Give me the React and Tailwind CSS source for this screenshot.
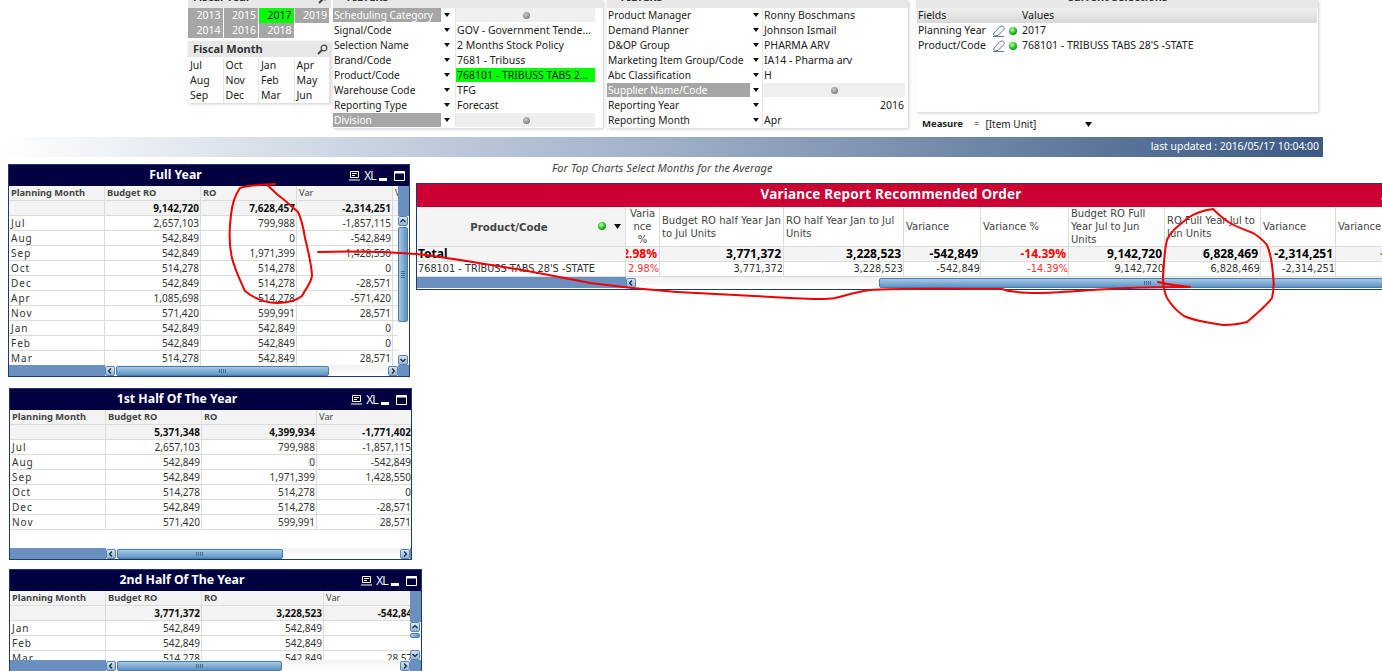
import React from 'react';

const sans = 'font-["Noto_Sans","DejaVu_Sans",sans-serif]';
const wide = 'font-["DejaVu_Sans",sans-serif]';

const fullYearRows = [
  ['Jul', '2,657,103', '799,988', '-1,857,115'],
  ['Aug', '542,849', '0', '-542,849'],
  ['Sep', '542,849', '1,971,399', '1,428,550'],
  ['Oct', '514,278', '514,278', '0'],
  ['Dec', '542,849', '514,278', '-28,571'],
  ['Apr', '1,085,698', '514,278', '-571,420'],
  ['Nov', '571,420', '599,991', '28,571'],
  ['Jan', '542,849', '542,849', '0'],
  ['Feb', '542,849', '542,849', '0'],
  ['Mar', '514,278', '542,849', '28,571'],
];
const firstHalfRows = [
  ['Jul', '2,657,103', '799,988', '-1,857,115'],
  ['Aug', '542,849', '0', '-542,849'],
  ['Sep', '542,849', '1,971,399', '1,428,550'],
  ['Oct', '514,278', '514,278', '0'],
  ['Dec', '542,849', '514,278', '-28,571'],
  ['Nov', '571,420', '599,991', '28,571'],
];
const secondHalfRows = [
  ['Jan', '542,849', '542,849', '0'],
  ['Feb', '542,849', '542,849', '0'],
  ['Mar', '514,278', '542,849', '28,571'],
];

const filtersLeft = [
  ['Scheduling Category', null, true],
  ['Signal/Code', 'GOV - Government Tende...'],
  ['Selection Name', '2 Months Stock Policy'],
  ['Brand/Code', '7681 - Tribuss'],
  ['Product/Code', '768101 - TRIBUSS TABS 2...', false, true],
  ['Warehouse Code', 'TFG'],
  ['Reporting Type', 'Forecast'],
  ['Division', null, true],
];
const filtersRight = [
  ['Product Manager', 'Ronny Boschmans'],
  ['Demand Planner', 'Johnson Ismail'],
  ['D&OP Group', 'PHARMA ARV'],
  ['Marketing Item Group/Code', 'IA14 - Pharma arv'],
  ['Abc Classification', 'H'],
  ['Supplier Name/Code', null, true],
  ['Reporting Year', '2016', false, false, true],
  ['Reporting Month', 'Apr'],
];

function TitleIcons() {
  return (
    <div className="flex items-center justify-end pr-[4px] text-white">
      <svg width="11" height="10" viewBox="0 0 11 10" fill="none" stroke="white" strokeWidth="1">
        <path d="M1.5.5h8v6h-8zM3 2.5h5M3 4.5h3M0 9h11" />
      </svg>
      <span className='ml-[4px] w-[11px] font-["Liberation_Sans",sans-serif] text-[13px] leading-none tracking-[-1px] scale-x-[0.85] origin-left'>XL</span>
      <svg className="ml-[4px]" width="9" height="10" viewBox="0 0 9 10"><path d="M0 7h8v3H0z" fill="white" /></svg>
      <svg className="ml-[6px]" width="11" height="10" viewBox="0 0 11 10" fill="none" stroke="white"><path d="M.5.5h10v9H.5z" /><path d="M.5 1.5h10" strokeWidth="2" /></svg>
    </div>
  );
}

function Arrow({ dir }) {
  const paths = {
    up: 'M2.5 6 5 3.5 7.5 6',
    down: 'M2.5 4 5 6.5 7.5 4',
    left: 'M6 2.5 3.5 5 6 7.5',
    right: 'M4 2.5 6.5 5 4 7.5',
  };
  return (
    <div className="w-[10px] h-[10px] shrink-0 rounded-[2px] border border-[#5a83ad] bg-gradient-to-b from-[#d8e6f3] to-[#8fb4d8]">
      <svg width="8" height="8" viewBox="1 1 8 8" fill="none" stroke="#123" strokeWidth="1.2"><path d={paths[dir]} /></svg>
    </div>
  );
}

function HScroll({ leftClass, thumbClass, rightClass }) {
  return (
    <div className="flex h-[11px] bg-[#6a90c0]">
      <div className={`shrink-0 ${leftClass}`} />
      <div className="flex-1 min-w-0 overflow-hidden flex items-center bg-gradient-to-b from-[#f2f2f2] to-white">
        <Arrow dir="left" />
        <div className={`h-[10px] shrink-0 ml-[1px] rounded-[2px] border border-[#4a7cab] bg-gradient-to-b from-[#a6c9e6] to-[#5e93c4] flex items-center justify-center ${thumbClass}`}>
          <svg width="8" height="4" viewBox="0 0 8 4" stroke="#4a6f94"><path d="M.5 0v4M2.5 0v4M4.5 0v4M6.5 0v4" /></svg>
        </div>
        <div className="flex-1" />
        <Arrow dir="right" />
      </div>
      {rightClass && <div className={`shrink-0 ${rightClass}`} />}
    </div>
  );
}

function VScroll({ thumbClass, topClass, trackH, ridges }) {
  return (
    <div className="w-[11px] shrink-0 flex flex-col bg-white">
      <div className={`bg-[#6a90c0] ${topClass}`} />
      <div className={`flex flex-col items-start ${trackH}`}>
        <Arrow dir="up" />
        <div className={`w-[10px] mt-[1px] rounded-[2px] border border-[#4a7cab] bg-gradient-to-r from-[#a6c9e6] to-[#5e93c4] flex items-center justify-center ${thumbClass}`}>
          {ridges && <svg width="4" height="8" viewBox="0 0 4 8" stroke="#4a6f94"><path d="M0 .5h4M0 2.5h4M0 4.5h4M0 6.5h4" /></svg>}
        </div>
        <div className="flex-1" />
        <Arrow dir="down" />
      </div>
    </div>
  );
}

function MonthTable({ title, total, rows, cols, boxClass, vscroll, thumbClass, rightClass, bodyClass, nextHeader }) {
  const headers = ['Planning Month', 'Budget RO', 'RO', 'Var'];
  return (
    <div className={`border border-[#1c3a72] bg-white flex flex-col overflow-hidden ${boxClass}`}>
      <div className="h-[21px] bg-[#000040] flex items-center shrink-0">
        <div className={`flex-1 text-center text-white font-bold text-[12.3px] ${sans}`}>{title}</div>
        <div className="w-[67px] shrink-0"><TitleIcons /></div>
      </div>
      <div className={`flex overflow-hidden ${bodyClass}`}>
        <div className="flex-1 min-w-0 overflow-hidden">
          <div className={`flex h-[15px] bg-[#f4f4f4] border-b border-[#dcdcdc] font-bold text-[#444] text-[9.3px] leading-[14px] ${sans}`}>
            {headers.map((h, i) => (
              <div key={h} className={`${cols[i]} shrink-0 pl-[2px] border-r border-[#dcdcdc] ${i === 3 ? 'font-normal' : ''}`}>{h}</div>
            ))}
            {nextHeader && <div className="w-[60px] shrink-0 pl-[2px] font-normal">{nextHeader}</div>}
          </div>
          <div className={`flex h-[15px] bg-[#f4f4f4] border-b border-[#dcdcdc] font-bold text-[#111] text-[10px] leading-[14px] ${sans}`}>
            {['', ...total].map((t, i) => (
              <div key={i} className={`${cols[i]} shrink-0 pr-[1px] text-right border-r border-[#dcdcdc]`}>{t}</div>
            ))}
          </div>
          {rows.map((r) => (
            <div key={r[0]} className={`flex h-[15px] border-b border-[#dcdcdc] text-[#333] text-[10px] leading-[14px] ${sans}`}>
              {r.map((c, i) => (
                <div key={i} className={`${cols[i]} shrink-0 border-r border-[#dcdcdc] ${i === 0 ? 'pl-[2px] text-left tracking-[1px]' : 'pr-[1px] text-right'}`}>{c}</div>
              ))}
            </div>
          ))}
        </div>
        {vscroll}
      </div>
      <div className="mt-auto">
        <HScroll leftClass="w-[96px]" thumbClass={thumbClass} rightClass={rightClass} />
      </div>
    </div>
  );
}

function Caption({ children, search, className, textClass, iconClass }) {
  return (
    <div className={`flex items-end justify-between bg-[#e8e8e8] overflow-hidden ${className}`}>
      <span className={`pl-[5px] font-bold text-[#333] text-[11px] leading-[15px] ${sans} ${textClass}`}>{children}</span>
      {search && (
        <svg className={`mr-[2px] ${iconClass}`} width="11" height="11" viewBox="0 0 11 11" fill="none" stroke="#444">
          <circle cx="7" cy="4" r="2.8" strokeWidth="1.2" />
          <path d="M5 6 1 10" strokeWidth="2" />
        </svg>
      )}
    </div>
  );
}

function ListCell({ children, tone }) {
  const tones = {
    grey: 'bg-[#a6a6a6] text-white border-white',
    green: 'bg-[#00ff00] text-[#222] border-white',
    plain: 'bg-white text-[#222] border-[#e6e6e6]',
    empty: 'bg-white border-white',
  };
  return <div className={`h-[15px] leading-[15px] pl-[2px] pr-[2px] text-[10.5px] border-r ${sans} ${tones[tone]}`}>{children}</div>;
}

function FilterRow({ row, labelClass, valueClass }) {
  const [label, value, grey, green, right] = row;
  return (
    <div className="flex h-[15px] items-start">
      <div className={`h-[14px] leading-[14px] pl-[1px] shrink-0 truncate text-[10.2px] ${sans} ${labelClass} ${grey ? 'bg-[#a6a6a6] text-white' : 'text-[#222]'}`}>{label}</div>
      <div className="w-[11px] h-[14px] shrink-0 flex items-center justify-center">
        <svg width="6" height="4" viewBox="0 0 6 4"><path d="M0 0h6L3 4z" fill="#111" /></svg>
      </div>
      <div className={`h-[14px] leading-[14px] pl-[1px] shrink-0 whitespace-nowrap overflow-hidden text-[10.5px] ml-[1px] border-l border-[#e6e6e6] ${sans} ${valueClass} ${green ? 'bg-[#00ff00]' : ''} ${grey ? 'bg-[#efefef] flex items-center justify-center' : ''} ${right ? 'text-right pr-[1px]' : ''} text-[#222]`}>
        {grey ? <span className="block w-[7px] h-[7px] rounded-full bg-[radial-gradient(circle_at_40%_35%,#ccc,#666)]" /> : value}
      </div>
    </div>
  );
}

function FilterBox({ rows, boxClass, labelClass, valueClass }) {
  return (
    <div className={`bg-white shrink-0 shadow-[1px_1px_3px_#ccc] ${boxClass}`}>
      <Caption className="h-[8px]" textClass="mb-[4px]">&nbsp;&nbsp;&nbsp;FILTERS</Caption>
      {rows.map((r) => <FilterRow key={r[0]} row={r} labelClass={labelClass} valueClass={valueClass} />)}
    </div>
  );
}

function GreenDot({ size }) {
  return <span className={`block rounded-full bg-[radial-gradient(circle_at_40%_35%,#baffa0,#12b012_60%,#0a7a0a)] ${size}`} />;
}

function Eraser() {
  return (
    <svg width="14" height="12" viewBox="0 0 14 12" fill="#f4f6fa" stroke="#6b7a8c" strokeWidth="1">
      <path d="M2 8 8 1.5C9.5.5 11.5 1 12 2.5c.5 1 0 2-.5 2.5L6 10.5H3.5C2 10.5 1 9.5 2 8z" />
      <path d="M1 11.5h11" fill="none" />
    </svg>
  );
}

function SelectionRow({ field, value }) {
  return (
    <div className={`flex h-[15px] items-center text-[10.5px] text-[#222] ${sans}`}>
      <div className="w-[75px] pl-[1px] shrink-0 whitespace-nowrap">{field}</div>
      <Eraser />
      <div className="ml-[3px] mr-[5px]"><GreenDot size="w-[8px] h-[8px]" /></div>
      <div>{value}</div>
    </div>
  );
}

function VarianceTable() {
  const cols = ['w-[209px]', 'w-[34px]', 'w-[124px]', 'w-[120px]', 'w-[77px]', 'w-[88px]', 'w-[96px]', 'w-[96px]', 'w-[75px]', 'w-[93px]'];
  const heads = ['', 'Varia nce %', 'Budget RO half Year Jan to Jul Units', 'RO half Year Jan to Jul Units', 'Variance', 'Variance %', 'Budget RO Full Year Jul to Jun Units', 'RO Full Year Jul to Jun Units', 'Variance', 'Variance %'];
  const totals = ['Total', '2.98%', '3,771,372', '3,228,523', '-542,849', '-14.39%', '9,142,720', '6,828,469', '-2,314,251', '-14.39%'];
  const line = ["768101 - TRIBUSS TABS 28'S -STATE", '2.98%', '3,771,372', '3,228,523', '-542,849', '-14.39%', '9,142,720', '6,828,469', '-2,314,251', '-14.39%'];
  const reds = [1, 5, 9];
  return (
    <div className="w-[966px] h-[107px] border-y border-l border-[#1c3a72] bg-white overflow-hidden">
      <div className="h-[23px] bg-[#cc0033] flex items-center relative">
        <div className={`w-[948px] pb-[2px] text-center text-white font-bold text-[13.5px] tracking-[0.2px] ${sans}`}>Variance Report Recommended Order</div>
        <div className="absolute left-[957px] top-[4px] w-[67px]"><TitleIcons /></div>
      </div>
      <div className="flex h-[40px] border-b border-[#dcdcdc]">
        <div className={`${cols[0]} shrink-0 bg-[#f4f4f4] border-r border-[#dcdcdc] flex items-center relative`}>
          <span className={`w-full text-center pr-[24px] pt-[3px] font-bold text-[10.2px] text-[#444] ${wide}`}>Product/Code</span>
          <div className="absolute left-[181px] top-[15px]"><GreenDot size="w-[8px] h-[8px]" /></div>
          <svg className="absolute left-[197px] top-[17px]" width="7" height="5" viewBox="0 0 7 5"><path d="M0 0h7L3.5 5z" fill="#111" /></svg>
        </div>
        {heads.slice(1).map((h, i) => (
          <div key={i} className={`${cols[i + 1]} shrink-0 flex items-center overflow-hidden border-r border-[#dcdcdc] px-[2px] text-[10px] leading-[13px] text-[#444] ${wide} ${i === 0 ? 'text-center break-all' : ''}`}>
            <span>{h}</span>
          </div>
        ))}
      </div>
      <div className="flex h-[15px] bg-[#f4f4f4] border-b border-[#dcdcdc] overflow-hidden">
        {totals.map((t, i) => (
          <div key={i} className={`${cols[i]} shrink-0 overflow-hidden whitespace-nowrap flex border-r border-[#dcdcdc] font-bold text-[12px] leading-[14px] ${sans} ${i === 0 ? 'justify-start pl-[1px]' : 'justify-end pr-[2px]'} ${reds.includes(i) ? 'text-[#ff0000]' : 'text-black'}`}>{t}</div>
        ))}
      </div>
      <div className="flex h-[15px] border-b border-[#dcdcdc] overflow-hidden">
        {line.map((t, i) => (
          <div key={i} className={`${cols[i]} shrink-0 overflow-hidden whitespace-nowrap flex border-r border-[#dcdcdc] text-[9.75px] leading-[14px] ${wide} ${i === 0 ? 'justify-start pl-[1px]' : 'justify-end'} ${reds.includes(i) ? 'text-[#ff3030]' : 'text-[#333]'}`}>{t}</div>
        ))}
      </div>
      <div className="h-[12px]">
        <HScroll leftClass="w-[209px]" thumbClass="w-[538px] ml-[243px]" />
      </div>
    </div>
  );
}

function Scribbles() {
  return (
    <svg className="absolute inset-0 pointer-events-none" width="1382" height="671" fill="none" stroke="#f00000" strokeWidth="2" strokeLinecap="round" strokeLinejoin="round">
      <path d="M275 184 C262 185 248 185 240 188 C235 195 232 205 231 215 C229 230 229 245 232 258 C235 270 240 280 245 291 C252 297 262 302 277 303 C290 303 297 300 302 296 C306 288 312 282 312 275 C311 262 308 250 305 238 C303 225 301 218 298 212 C292 207 285 200 278 195 C273 191 270 187 267 185" />
      <path d="M318 252 C350 251 390 252 416 254 C440 256 470 262 510 268 C540 273 560 277 590 283 C620 287 650 290 677 292 C710 294 750 296 790 298 C810 299 825 300 835 298 C848 295 855 292 870 290 C900 288 960 289 1002 289 C1010 292 1025 293 1040 293 C1070 292 1100 289 1130 288 C1150 287 1170 287 1190 287 C1180 286 1165 284 1158 282" />
      <path d="M1213 209 C1205 210 1195 213 1188 218 C1178 226 1170 232 1167 240 C1164 252 1164 265 1163 276 C1163 285 1164 292 1167 298 C1172 306 1178 312 1184 316 C1195 321 1210 323 1223 325 C1232 325 1240 324 1247 322 C1256 314 1266 306 1272 298 C1274 290 1274 282 1273 275 C1272 262 1270 252 1267 245 C1263 240 1258 236 1253 233 C1245 230 1237 227 1230 223 C1223 219 1217 213 1213 209" />
    </svg>
  );
}

export default function App() {
  return (
    <div className="relative w-[1382px] h-[671px] overflow-hidden bg-white">
      {/* top selection boxes */}
      <div className="flex h-[137px] pl-[188px]">
        <div className="w-[143px] shrink-0">
          <Caption search className="h-[8px]" textClass="mb-[4px]" iconClass="mb-[4px]">Fiscal Year</Caption>
          <div className="grid grid-cols-4 w-[142px] text-right">
            {['2013', '2015', '2017', '2019', '2014', '2016', '2018', ''].map((y, i) => (
              <ListCell key={i} tone={y === '' ? 'empty' : y === '2017' ? 'green' : 'grey'}>{y}</ListCell>
            ))}
          </div>
          <div className="mt-[3px] shadow-[1px_1px_3px_#ccc] w-[142px]">
            <Caption search className="h-[16px]" textClass="mb-[1px]" iconClass="mb-[2px]">Fiscal Month</Caption>
            <div className="grid grid-cols-4 bg-white pt-[1px]">
              {['Jul', 'Oct', 'Jan', 'Apr', 'Aug', 'Nov', 'Feb', 'May', 'Sep', 'Dec', 'Mar', 'Jun'].map((m) => (
                <ListCell key={m} tone="plain">{m}</ListCell>
              ))}
            </div>
          </div>
        </div>
        <FilterBox rows={filtersLeft} boxClass="ml-[2px] w-[270px] h-[128px]" labelClass="w-[108px]" valueClass="w-[140px] ml-[3px]" />
        <FilterBox rows={filtersRight} boxClass="ml-[4px] w-[301px] h-[128px]" labelClass="w-[143px]" valueClass="w-[143px]" />
        <div className="ml-[8px] w-[402px] shrink-0">
          <div className="h-[112px] bg-white shadow-[1px_1px_3px_#ccc]">
            <div className="h-[8px] bg-[#e8e8e8] overflow-hidden flex items-end justify-center">
              <span className={`font-bold text-[11px] leading-[15px] mb-[4px] text-[#333] ${sans}`}>Current Selections</span>
            </div>
            <div className={`flex h-[15px] mx-[1px] items-center bg-gradient-to-b from-[#f0f0f0] to-[#d8d8d8] text-[10.5px] text-[#222] ${sans}`}>
              <div className="w-[105px] pl-[1px]">Fields</div>
              <div>Values</div>
            </div>
            <div className="px-[1px]">
              <SelectionRow field="Planning Year" value="2017" />
              <SelectionRow field="Product/Code" value="768101 - TRIBUSS TABS 28'S -STATE" />
            </div>
          </div>
          <div className={`flex items-center mt-[5px] ml-[6px] h-[15px] text-[9.5px] text-[#222] ${sans}`}>
            <span className="font-bold w-[40px]">Measure</span>
            <span className="ml-[12px]">=</span>
            <span className="ml-[6px] w-[100px] text-[10px]">[Item Unit]</span>
            <svg width="7" height="5" viewBox="0 0 7 5"><path d="M0 0h7L3.5 5z" fill="#111" /></svg>
          </div>
        </div>
      </div>

      {/* status bar */}
      <div className="w-[1323px] h-[20px] bg-gradient-to-r from-white via-[#9fb0c8] via-50% to-[#3c5a84] flex items-center justify-end pr-[4px]">
        <span className={`text-white text-[10.4px] ${sans}`}>last updated : 2016/05/17 10:04:00</span>
      </div>

      <div className="flex">
        {/* month tables */}
        <div className="w-[416px] shrink-0 flex flex-col pt-[7px] pl-[8px]">
          <MonthTable
            title="Full Year"
            total={['9,142,720', '7,628,457', '-2,314,251']}
            rows={fullYearRows}
            cols={['w-[96px]', 'w-[96px]', 'w-[96px]', 'w-[96px]']}
            boxClass="w-[402px] h-[213px]"
            bodyClass="h-[179px]"
            thumbClass="w-[213px]"
            rightClass="w-[11px]"
            nextHeader="Var %"
            vscroll={<VScroll topClass="h-[30px]" trackH="h-[149px]" thumbClass="h-[95px]" ridges />}
          />
          <MonthTable
            title="1st Half Of The Year"
            total={['5,371,348', '4,399,934', '-1,771,402']}
            rows={firstHalfRows}
            cols={['w-[96px]', 'w-[96px]', 'w-[115px]', 'w-[96px]']}
            boxClass="w-[403px] h-[172px] mt-[11px] ml-[1px]"
            bodyClass="h-[137px]"
            thumbClass="w-[166px]"
            rightClass="w-[1px]"
          />
          <MonthTable
            title="2nd Half Of The Year"
            total={['3,771,372', '3,228,523', '-542,849']}
            rows={secondHalfRows}
            cols={['w-[96px]', 'w-[96px]', 'w-[122px]', 'w-[96px]']}
            boxClass="w-[413px] h-[103px] mt-[9px] ml-[1px]"
            bodyClass="h-[69px]"
            thumbClass="w-[165px]"
            rightClass="w-[11px]"
            vscroll={<VScroll topClass="h-[31px]" trackH="h-[38px]" thumbClass="h-[5px]" />}
          />
        </div>

        {/* variance report */}
        <div className="flex-1 min-w-0">
          <div className={`ml-[136px] mt-[3px] h-[23px] italic text-[11px] tracking-[0.05px] text-[#444] ${sans}`}>For Top Charts Select Months for the Average</div>
          <VarianceTable />
        </div>
      </div>

      <Scribbles />
    </div>
  );
}
